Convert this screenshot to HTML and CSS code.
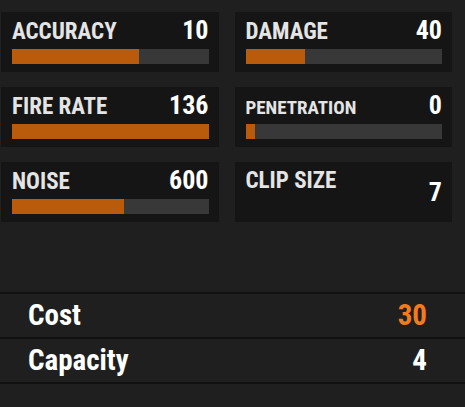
FILE: index.html
```html
<!DOCTYPE html>
<html>
<head>
<meta charset="utf-8">
<link rel="stylesheet" href="styles.css">
</head>
<body>
<div class="stats">
  <div class="card">
    <div class="head"><span class="label">ACCURACY</span><span class="value">10</span></div>
    <div class="bar"><div class="fill" style="width:64.5%"></div></div>
  </div>
  <div class="card">
    <div class="head"><span class="label">DAMAGE</span><span class="value">40</span></div>
    <div class="bar"><div class="fill" style="width:30.5%"></div></div>
  </div>
  <div class="card">
    <div class="head"><span class="label">FIRE RATE</span><span class="value">136</span></div>
    <div class="bar"><div class="fill" style="width:100%"></div></div>
  </div>
  <div class="card">
    <div class="head"><span class="label label-small">PENETRATION</span><span class="value">0</span></div>
    <div class="bar"><div class="fill" style="width:5%"></div></div>
  </div>
  <div class="card">
    <div class="head"><span class="label">NOISE</span><span class="value">600</span></div>
    <div class="bar"><div class="fill" style="width:57%"></div></div>
  </div>
  <div class="card card-plain">
    <span class="label">CLIP SIZE</span><span class="value">7</span>
  </div>
</div>
<div class="info">
  <div class="row"><span class="name">Cost</span><span class="amount amount-cost">30</span></div>
  <div class="row"><span class="name">Capacity</span><span class="amount">4</span></div>
</div>
</body>
</html>
```
FILE: styles.css
```css
html, body {
  margin: 0;
  padding: 0;
  background: #1f1f1f;
}
body {
  width: 465px;
  height: 407px;
  overflow: hidden;
  font-family: "Roboto Condensed", "Liberation Sans Narrow", Roboto, sans-serif;
  font-stretch: condensed;
  font-weight: 700;
}
.stats {
  display: grid;
  grid-template-columns: 1fr 1fr;
  column-gap: 16px;
  row-gap: 15px;
  padding: 12px 13px 0 1px;
}
.card {
  height: 60px;
  box-sizing: border-box;
  background: #151515;
  padding: 0 10px 0 11px;
}
.head {
  display: flex;
  justify-content: space-between;
  align-items: baseline;
  padding-top: 6px;
  height: 25px;
}
.label {
  font-size: 23px;
  line-height: 25px;
  color: #e4e4e4;
}
.label-small {
  font-size: 19px;
}
.value {
  font-size: 26px;
  line-height: 25px;
  color: #ffffff;
}
.bar {
  margin-top: 6px;
  height: 15px;
  background: #383838;
}
.fill {
  height: 100%;
  background: #b95b0a;
}
.card-plain {
  display: flex;
  justify-content: space-between;
  align-items: flex-start;
}
.card-plain .label {
  padding-top: 6px;
}
.card-plain .value {
  align-self: center;
}
.info {
  margin-top: 70px;
  border-top: 2px solid #111111;
}
.row {
  display: flex;
  justify-content: space-between;
  height: 43px;
  line-height: 43px;
  padding: 0 38px 0 28px;
  border-bottom: 2px solid #111111;
  font-size: 29px;
  color: #ffffff;
}
.amount-cost {
  color: #f47a1c;
}
```
